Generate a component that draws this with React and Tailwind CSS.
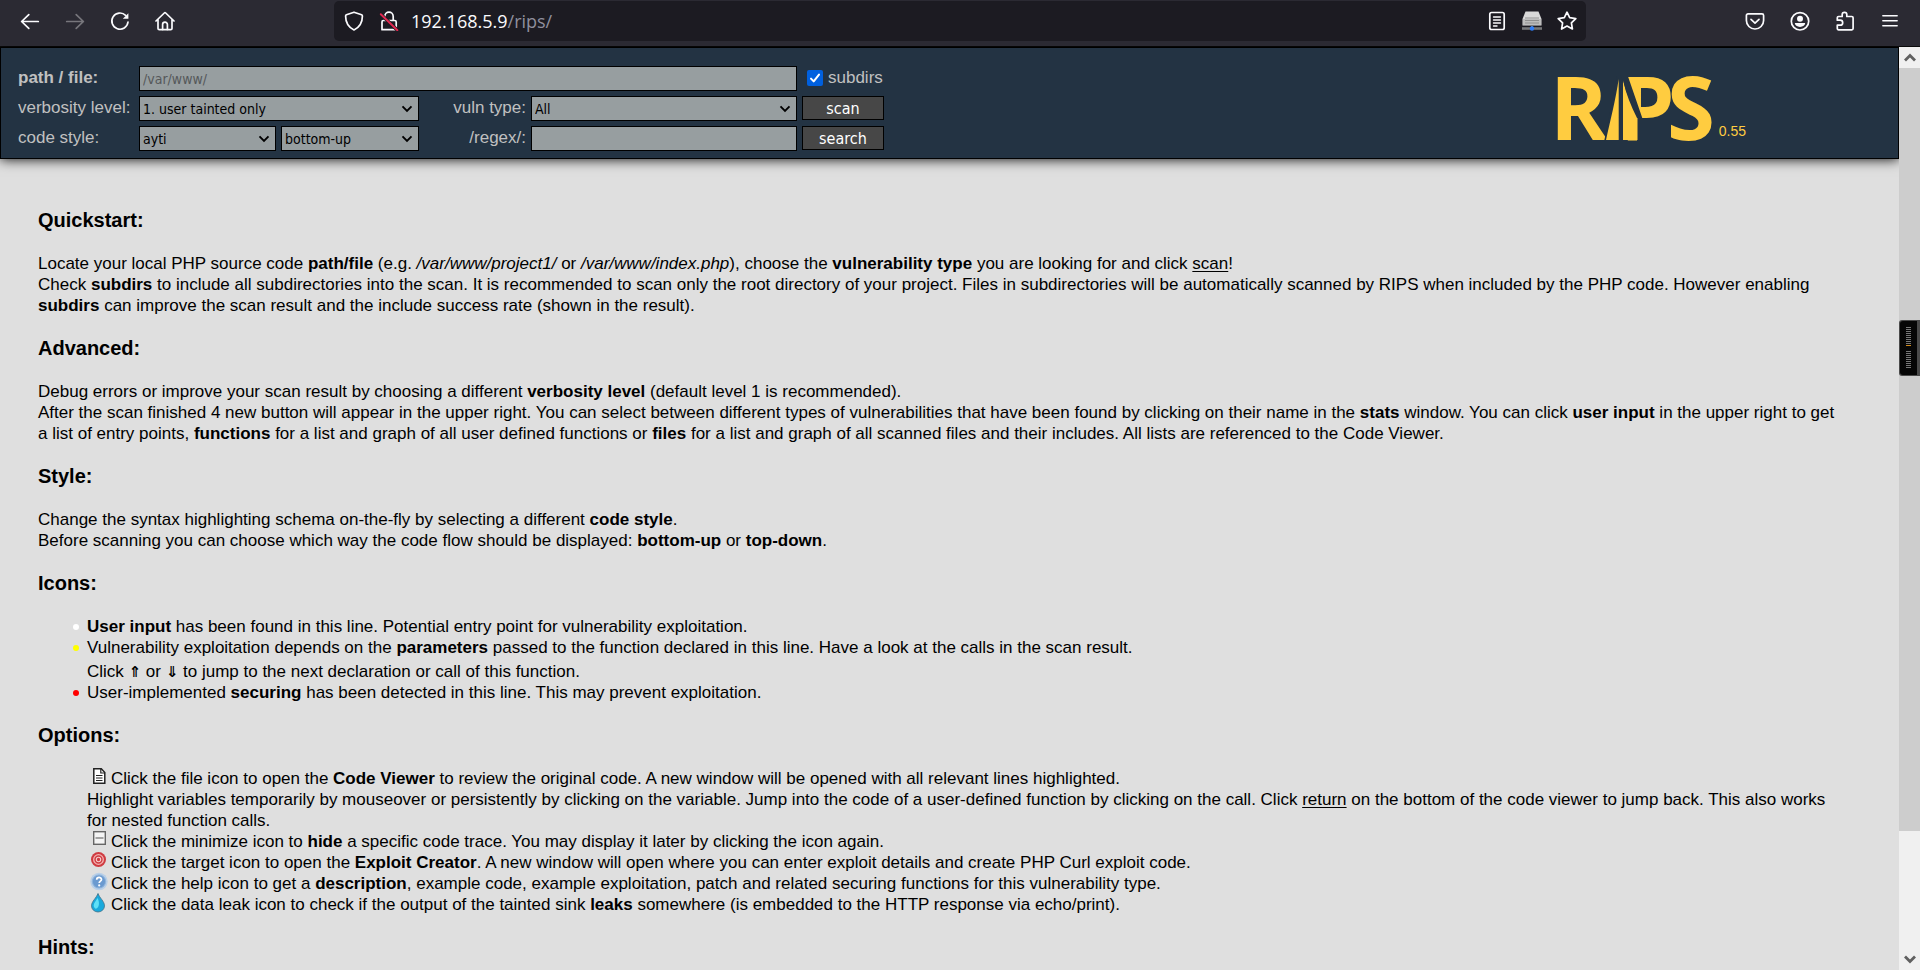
function ToolButton({ label, children }) {
  return (
    <button type="button" aria-label={label} className="flex h-10 w-[45px] items-center justify-center text-[#fbfbfe]">
      {children}
    </button>
  );
}

function LineIcon({ children, className = "size-5" }) {
  return (
    <svg viewBox="0 0 20 20" className={className} fill="none" stroke="currentColor" strokeWidth="1.7" strokeLinecap="round" strokeLinejoin="round">
      {children}
    </svg>
  );
}

function BrowserBar() {
  return (
    <nav className="relative z-20 flex h-[46px] shrink-0 items-start bg-[#2b2a33] pt-px pr-[8px] pl-[7px]">
      <ToolButton label="Back">
        <LineIcon><path d="M18.3 10.5H1.8M8.8 3.6L1.6 10.5l7.2 6.9" /></LineIcon>
      </ToolButton>
      <ToolButton label="Forward">
        <LineIcon className="size-5 text-[#77767c]"><path d="M1.7 10.5h16.5M11.2 3.6l7.2 6.9-7.2 6.9" /></LineIcon>
      </ToolButton>
      <ToolButton label="Reload">
        <LineIcon>
          <path d="M15.6 4.3A8.1 8.1 0 1 0 18 11" />
          <path d="M18.4 2.2v5.6h-5.6z" fill="currentColor" stroke="none" />
        </LineIcon>
      </ToolButton>
      <ToolButton label="Home">
        <LineIcon>
          <path d="M1 10L9.3 2a1 1 0 0 1 1.4 0L19 10M3 8.4v9c0 .8.5 1.3 1.3 1.3h11.4c.8 0 1.3-.5 1.3-1.3v-9" />
          <path d="M7.6 18.5v-5a2.4 2.4 0 0 1 4.8 0v5" />
        </LineIcon>
      </ToolButton>

      <div className="mr-[146px] ml-[147px] flex h-10 flex-1 items-center rounded-[5px] bg-[#1c1b22] pr-[2px] pl-[10px]">
        <button type="button" aria-label="Tracking protection" className="mr-[15px] text-[#fbfbfe]">
          <LineIcon><path d="M10 1.2l7.6 2.6c.5.2.8.6.8 1.2 0 6.700-2.600 11.200-8.400 13.900C4.200 16.200 1.600 11.700 1.600 5c0-.6.3-1 .8-1.200z" /></LineIcon>
        </button>
        <button type="button" aria-label="Connection not secure" className="mr-[12px] text-[#fbfbfe]">
          <LineIcon>
            <path d="M5.800 8.800V5.400a4.200 4.200 0 0 1 8.400 0v3.400M3 18.700h14.200V11c0-.9-.6-1.500-1.500-1.500H4.300C3.500 9.500 3 10 3 11z" />
            <path d="M1.800 3.200l16.600 16" stroke="#1c1b22" strokeWidth="3.600" />
            <path d="M1.800 3.200l16.600 16" stroke="#e22850" strokeWidth="1.900" />
          </LineIcon>
        </button>
        <span className="flex-1 font-['Open_Sans',sans-serif] text-[18px] leading-[24px] text-[#8f8f9d]">
          <span className="text-[#fbfbfe]">192.168.5.9</span>/rips/
        </span>
        <button type="button" aria-label="Reader view" className="flex w-[35px] justify-center text-[#fbfbfe]">
          <LineIcon>
            <rect x="2.800" y="1.500" width="14.400" height="17" rx="1.800" />
            <path d="M6.500 6h7M6.500 9h7M6.500 12h7M6.500 15h3.500" strokeWidth="1.400" />
          </LineIcon>
        </button>
        <button type="button" aria-label="Proxy" className="flex w-[35px] justify-center">
          <svg viewBox="0 0 20 20" className="size-5">
            <path d="M3.500 0.500h13L19.500 8v6.500H.5V8z" fill="#d9d9d9" />
            <path d="M1 8h18v6H1z" fill="#bdbdbd" />
            <path d="M3 7h14M3 9.500h14M3 12h14" stroke="#8a8a8a" strokeWidth="0.900" />
            <path d="M0 17.500h20" stroke="#77787a" strokeWidth="2.600" />
            <path d="M10 14v3" stroke="#77787a" strokeWidth="2" />
            <circle cx="10" cy="17.500" r="2.200" fill="#2f7df6" />
          </svg>
        </button>
        <button type="button" aria-label="Bookmark this page" className="flex w-[35px] justify-center text-[#fbfbfe]">
          <LineIcon><path d="M10 1.200l2.700 5.500 6.100.9-4.400 4.300 1 6.100L10 15.100 4.600 18l1-6.100L1.200 7.600l6.100-.9z" /></LineIcon>
        </button>
      </div>

      <ToolButton label="Save to Pocket">
        <LineIcon>
          <path d="M3 2.800h14a1.600 1.600 0 0 1 1.600 1.600v5a8.600 8.600 0 0 1-17.200 0v-5A1.600 1.600 0 0 1 3 2.800z" />
          <path d="M6 8.300l4 3.800 4-3.800" />
        </LineIcon>
      </ToolButton>
      <ToolButton label="Account">
        <LineIcon>
          <circle cx="10" cy="10.300" r="8.700" />
          <circle cx="10" cy="7.700" r="3" fill="currentColor" stroke="none" />
          <path d="M4.800 12h10.400a5.200 3.900 0 0 1-10.400 0z" fill="currentColor" stroke="none" />
        </LineIcon>
      </ToolButton>
      <ToolButton label="Extensions">
        <LineIcon>
          <path d="M2.300 9.200V6.800c0-.8.500-1.300 1.300-1.300h3.600V3.600a2.300 2.300 0 0 1 4.600 0v1.900h5c.8 0 1.300.5 1.300 1.300v10.700c0 .8-.5 1.300-1.300 1.300H3.600c-.8 0-1.300-.5-1.300-1.300v-3.300h2.900a2.400 2.400 0 0 0 0-5z" />
        </LineIcon>
      </ToolButton>
      <ToolButton label="Menu">
        <LineIcon><path d="M2.800 4.700h14.400M2.800 9.700h14.400M2.800 14.700h14.400" strokeWidth="1.400" /></LineIcon>
      </ToolButton>
    </nav>
  );
}

const field =
  "h-[25px] w-full appearance-none rounded-none border border-black bg-[#979ea0] px-[3px] font-['DejaVu_Sans_Condensed','DejaVu_Sans',sans-serif] text-[14px] leading-[20px] text-black outline-none placeholder:text-[#55585a]";

function Select({ id, label, options }) {
  return (
    <div className="relative">
      <select id={id} aria-label={label} className={field}>
        {options.map((o) => (
          <option key={o}>{o}</option>
        ))}
      </select>
      <svg viewBox="0 0 12 8" className="pointer-events-none absolute top-[9px] right-[6px] h-[8px] w-[12px]" fill="none" stroke="#000" strokeWidth="1.900">
        <path d="M1.500 1.300L6 5.800l4.500-4.500" />
      </svg>
    </div>
  );
}

function SubmitButton({ children }) {
  return (
    <button type="button" className="ml-[5px] h-[24px] border border-black bg-[#474747] pt-[2px] font-['DejaVu_Sans_Condensed','DejaVu_Sans',sans-serif] text-[16px] leading-[20px] text-white">
      {children}
    </button>
  );
}

function Logo() {
  return (
    <a href="#rips" aria-label="RIPS 0.55" className="mt-[6px] mr-[152px] flex items-end gap-[7px] text-[#ffcc40]">
      <svg viewBox="0 0 153 70" className="h-[70px] w-[153px] overflow-visible" fill="currentColor">
        <g className="font-['Open_Sans',sans-serif] text-[87px] font-bold">
          <text x="-9" y="68">R</text>
          <text x="61" y="68">P</text>
          <text x="108" y="68">S</text>
        </g>
        <path d="M45 70L58 4h6v66z" fill="#233343" />
        <path d="M78 46h8v24h-8z" fill="#233343" />
        <path d="M59.700 7C57 26 51 50 47 68h12.700z" />
        <path d="M64 8c3 12 9 26 14.500 38v22H64z" />
        <path d="M61 3h7.500l14.800 43H78C72 34 67 22 64 8z" fill="#233343" />
      </svg>
      <span className="mb-[3px] text-[14px] leading-[16px]">0.55</span>
    </a>
  );
}

function Header() {
  return (
    <header className="relative z-10 flex shrink-0 items-start justify-between border border-black bg-[#233343] pt-[18px] pb-[7px] pl-[17px] shadow-[0_0_12px_#000]">
      <form className="grid grid-cols-[121px_280px_112px_266px_87px] gap-y-[5px] text-[17px] leading-[24px] text-[#c0c0c0]">
        <label htmlFor="path" className="font-bold">path / file:</label>
        <input id="path" type="text" placeholder="/var/www/" className={`${field} col-span-3`} />
        <label className="ml-[10px] flex h-[24px] items-center gap-[5px]">
          <span className="relative flex">
            <input type="checkbox" defaultChecked className="size-4 appearance-none rounded-[2px] bg-[#0060df]" />
            <svg viewBox="0 0 16 16" className="pointer-events-none absolute inset-0 size-4" fill="none" stroke="#fff" strokeWidth="2" strokeLinecap="round" strokeLinejoin="round">
              <path d="M4 8.600l2.700 2.800L12 4.600" />
            </svg>
          </span>
          subdirs
        </label>

        <label htmlFor="verbosity">verbosity level:</label>
        <Select id="verbosity" options={["1. user tainted only", "2. file/DB tainted +1"]} />
        <label htmlFor="vector" className="pr-[5px] text-right">vuln type:</label>
        <Select id="vector" options={["All", "All server-side"]} />
        <SubmitButton>scan</SubmitButton>

        <label htmlFor="css">code style:</label>
        <div className="grid grid-cols-[137px_138px] gap-x-[5px]">
          <Select id="css" options={["ayti", "phps"]} />
          <Select id="flow" label="code flow" options={["bottom-up", "top-down"]} />
        </div>
        <label htmlFor="search" className="pr-[5px] text-right">/regex/:</label>
        <input id="search" type="text" className={field} />
        <SubmitButton>search</SubmitButton>
      </form>
      <Logo />
    </header>
  );
}

function Section({ title, children }) {
  return (
    <section>
      <h3 className="mt-[21px] mb-[22px] text-[20px] leading-[22px] font-bold">{title}</h3>
      {children}
    </section>
  );
}

function Bullet({ color, children }) {
  return (
    <li className="flex items-start gap-[8px]">
      <span className={`mt-[8px] size-[6px] shrink-0 rounded-full ${color}`} />
      <div>{children}</div>
    </li>
  );
}

function IconLine({ icon, children }) {
  return (
    <div className="flex items-start">
      <span className="flex h-[21px] w-[24px] shrink-0 items-start pl-[3px]">{icon}</span>
      <span>{children}</span>
    </div>
  );
}

const fileIcon = (
  <svg viewBox="0 0 18 20" className="-mt-px h-[20px] w-[18px]" fill="#fff" stroke="#222" strokeWidth="1.500">
    <path d="M3.800 1.800h7.500l3.500 3.700V16.300H3.800z" />
    <path d="M10.800 2v4h4M6 8.500h6.500M6 11h6.500M6 13.500h6.500" fill="none" strokeWidth="1.200" />
  </svg>
);
const minimizeIcon = (
  <svg viewBox="0 0 18 20" className="-mt-px h-[20px] w-[18px]">
    <rect x="3.700" y="1.700" width="11.600" height="12.600" fill="#f4f4f4" stroke="#666" strokeWidth="1.400" />
    <path d="M5.500 8h8" stroke="#777" strokeWidth="1.300" />
  </svg>
);
const targetIcon = (
  <svg viewBox="0 0 18 20" className="-mt-px h-[20px] w-[18px]">
    <circle cx="8.500" cy="8.500" r="7.500" fill="#cf3b41" />
    <circle cx="8.500" cy="8.500" r="4.800" fill="none" stroke="#f3b3b3" strokeWidth="1.300" />
    <circle cx="8.500" cy="8.500" r="2.200" fill="#cf3b41" stroke="#f6cccc" strokeWidth="1.100" />
  </svg>
);
const helpIcon = (
  <svg viewBox="0 0 18 20" className="-mt-px h-[20px] w-[18px]">
    <circle cx="9" cy="9.500" r="8.700" fill="#b8cfe8" />
    <circle cx="9" cy="9.500" r="6.600" fill="#6b9ad0" stroke="#8fb4dc" strokeWidth="1" />
    <path d="M6.700 7.800c0-3.200 4.800-3 4.800-.3 0 1.700-2.300 1.700-2.300 3.600" fill="none" stroke="#fff" strokeWidth="1.700" />
    <circle cx="9.200" cy="13.400" r="1.100" fill="#fff" />
  </svg>
);
const dropIcon = (
  <svg viewBox="0 0 18 20" className="-mt-px h-[20px] w-[18px]">
    <path d="M8 .5c1.500 4.300 6.500 8 6.500 12.300a6.300 6 0 0 1-13 0C1.500 8.500 6.500 4.800 8 .5z" fill="#1aa9dc" stroke="#3f6f86" strokeWidth="0.800" />
    <path d="M7.500 5c-1 2.500-3.800 4.800-3.800 7.500 0 1.500 1 2.800 2 3.300 4-1 4-7 1.800-10.800z" fill="#5fe0f7" />
  </svg>
);

function Arrow({ children }) {
  return <b className="font-['DejaVu_Sans',sans-serif] text-[15px] leading-none">{children}</b>;
}

function Help() {
  return (
    <main className="min-h-0 flex-1 overflow-hidden pt-[29px] pr-[55px] pl-[38px] text-[17px] leading-[21px] text-black">
      <Section title="Quickstart:">
        <p>
          Locate your local PHP source code <b>path/file</b> (e.g. <em>/var/www/project1/</em> or <em>/var/www/index.php</em>), choose the <b>vulnerability type</b> you are looking for and click <u className="underline-offset-2">scan</u>!<br />
          Check <b>subdirs</b> to include all subdirectories into the scan. It is recommended to scan only the root directory of your project. Files in subdirectories will be automatically scanned by RIPS when included by the PHP code. However enabling <b>subdirs</b> can improve the scan result and the include success rate (shown in the result).
        </p>
      </Section>
      <Section title="Advanced:">
        <p>
          Debug errors or improve your scan result by choosing a different <b>verbosity level</b> (default level 1 is recommended).<br />
          After the scan finished 4 new button will appear in the upper right. You can select between different types of vulnerabilities that have been found by clicking on their name in the <b>stats</b> window. You can click <b>user input</b> in the upper right to get a list of entry points, <b>functions</b> for a list and graph of all user defined functions or <b>files</b> for a list and graph of all scanned files and their includes. All lists are referenced to the Code Viewer.
        </p>
      </Section>
      <Section title="Style:">
        <p>
          Change the syntax highlighting schema on-the-fly by selecting a different <b>code style</b>.<br />
          Before scanning you can choose which way the code flow should be displayed: <b>bottom-up</b> or <b>top-down</b>.
        </p>
      </Section>
      <Section title="Icons:">
        <ul className="pl-[35px]">
          <Bullet color="bg-white"><b>User input</b> has been found in this line. Potential entry point for vulnerability exploitation.</Bullet>
          <Bullet color="bg-[#ffff00]">
            Vulnerability exploitation depends on the <b>parameters</b> passed to the function declared in this line. Have a look at the calls in the scan result.
            <div className="pt-[3px]">Click <Arrow>⇑</Arrow> or <Arrow>⇓</Arrow> to jump to the next declaration or call of this function.</div>
          </Bullet>
          <Bullet color="bg-[#ff0000]">User-implemented <b>securing</b> has been detected in this line. This may prevent exploitation.</Bullet>
        </ul>
      </Section>
      <Section title="Options:">
        <div className="pl-[49px]">
          <IconLine icon={fileIcon}>Click the file icon to open the <b>Code Viewer</b> to review the original code. A new window will be opened with all relevant lines highlighted.</IconLine>
          <p>
            Highlight variables temporarily by mouseover or persistently by clicking on the variable. Jump into the code of a user-defined function by clicking on the call. Click <u className="underline-offset-2">return</u> on the bottom of the code viewer to jump back. This also works for nested function calls.
          </p>
          <IconLine icon={minimizeIcon}>Click the minimize icon to <b>hide</b> a specific code trace. You may display it later by clicking the icon again.</IconLine>
          <IconLine icon={targetIcon}>Click the target icon to open the <b>Exploit Creator</b>. A new window will open where you can enter exploit details and create PHP Curl exploit code.</IconLine>
          <IconLine icon={helpIcon}>Click the help icon to get a <b>description</b>, example code, example exploitation, patch and related securing functions for this vulnerability type.</IconLine>
          <IconLine icon={dropIcon}>Click the data leak icon to check if the output of the tainted sink <b>leaks</b> somewhere (is embedded to the HTTP response via echo/print).</IconLine>
        </div>
      </Section>
      <Section title="Hints:" />
    </main>
  );
}

const ticks = [0, 2, 4, 6, 8, 10, 12, 14, 16];

function Scrollbar() {
  return (
    <div className="relative z-20 flex w-[21px] shrink-0 flex-col bg-[#f0f0f0]">
      <div className="flex h-[21px] items-center justify-center">
        <svg viewBox="0 0 12 9" className="h-[9px] w-[12px]" fill="none" stroke="#606060" strokeWidth="2.800"><path d="M1 7.500l5-5 5 5" /></svg>
      </div>
      <div className="flex-[763] bg-[#cdcdcd]" />
      <div className="flex-[118]" />
      <div className="flex h-[21px] items-center justify-center">
        <svg viewBox="0 0 12 9" className="h-[9px] w-[12px]" fill="none" stroke="#606060" strokeWidth="2.800"><path d="M1 1.500l5 5 5-5" /></svg>
      </div>
      <svg viewBox="0 0 21 56" className="absolute top-[273px] right-0 h-[56px] w-[21px]">
        <path d="M21 0H3a3 3 0 0 0-3 3v50a3 3 0 0 0 3 3h18z" fill="#4a4a4a" />
        <path d="M18 1H4a3 3 0 0 0-3 3v48a3 3 0 0 0 3 3h14z" fill="#060606" />
        {ticks.map((t) => (
          <g key={t}>
            <rect x="7" y={7 + t} width="5" height="1" fill="#777" />
            <rect x="7" y={31 + t} width="5" height="1" fill="#777" />
          </g>
        ))}
        <rect x="7" y="25" width="5" height="1" fill="#d08a1c" />
      </svg>
    </div>
  );
}

export default function App() {
  return (
    <div className="flex h-screen flex-col overflow-hidden bg-[#dfdfdf] font-['Liberation_Sans',Arial,sans-serif]">
      <BrowserBar />
      <div className="flex min-h-0 flex-1 border-t border-[#0c0c0d]">
        <div className="flex min-w-0 flex-1 flex-col">
          <Header />
          <Help />
        </div>
        <Scrollbar />
      </div>
    </div>
  );
}
